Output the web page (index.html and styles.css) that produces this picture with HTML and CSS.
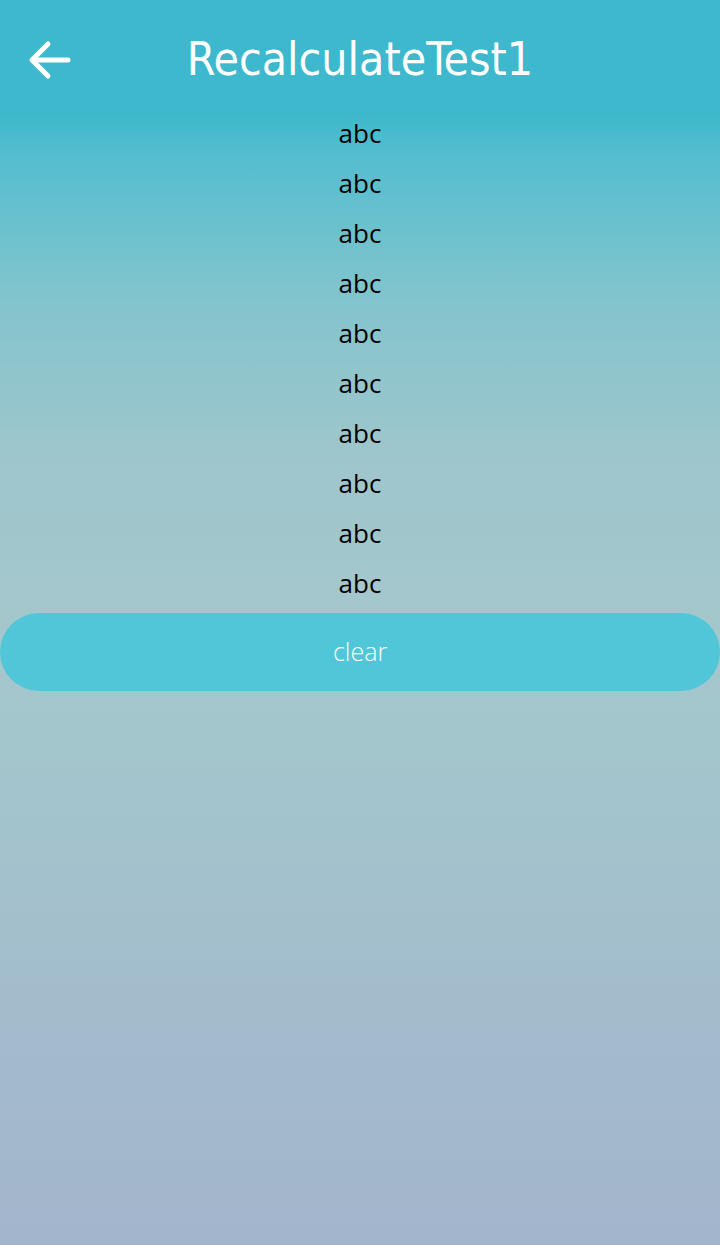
FILE: index.html
```html
<!DOCTYPE html>
<html>
<head>
<meta charset="utf-8">
<link rel="stylesheet" href="styles.css">
</head>
<body>
<div class="app">
  <header class="header">
    <button class="back" aria-label="back">
      <svg width="44" height="40" viewBox="0 0 44 40">
        <path d="M40 20 H5 M20 4 L4 20 L20 36" fill="none" stroke="#fff" stroke-width="5" stroke-linecap="round" stroke-linejoin="round"/>
      </svg>
    </button>
    <h1 class="title">RecalculateTest1</h1>
  </header>
  <main class="content">
    <ul class="list">
      <li class="item">abc</li>
      <li class="item">abc</li>
      <li class="item">abc</li>
      <li class="item">abc</li>
      <li class="item">abc</li>
      <li class="item">abc</li>
      <li class="item">abc</li>
      <li class="item">abc</li>
      <li class="item">abc</li>
      <li class="item">abc</li>
    </ul>
    <button class="clear">clear</button>
  </main>
</div>
</body>
</html>
```
FILE: styles.css
```css
html, body {
  margin: 0;
  padding: 0;
}
body {
  width: 720px;
  height: 1245px;
  overflow: hidden;
  font-family: "DejaVu Sans Condensed", "DejaVu Sans", sans-serif;
}
.app {
  height: 1245px;
  display: flex;
  flex-direction: column;
  background: linear-gradient(180deg, #3cb8cc 0px, #3cb8cc 112px, #52bdcf 150px, #83c4cd 300px, #9dc6cc 450px, #a4c7cc 620px, #a3c4cc 800px, #a3bccc 1000px, #a3b5cc 1245px);
}
.header {
  height: 112px;
  flex: none;
  display: flex;
  align-items: center;
  justify-content: center;
  position: relative;
  background: #3db8cc;
}
.back {
  position: absolute;
  left: 28px;
  top: 40px;
  padding: 0;
  border: 0;
  background: none;
  display: flex;
}
.title {
  margin: 0;
  color: #fff;
  font-weight: normal;
  font-size: 46px;
  padding-top: 6px;
}
.content {
  display: flex;
  flex-direction: column;
}
.list {
  list-style: none;
  margin: 0;
  padding: 0;
}
.item {
  height: 50px;
  display: flex;
  align-items: center;
  justify-content: center;
  font-size: 26px;
  color: #000;
  font-family: "Open Sans", sans-serif;
}
.list .item:first-child {
  margin-top: -4px;
}
.clear {
  margin-top: 5px;
  height: 78px;
  border: 0;
  border-radius: 39px;
  background: #52c6d9;
  color: #fff;
  font-family: "Open Sans", sans-serif;
  font-weight: 300;
  font-size: 25px;
  padding: 0 0 3px 0;
}
```
